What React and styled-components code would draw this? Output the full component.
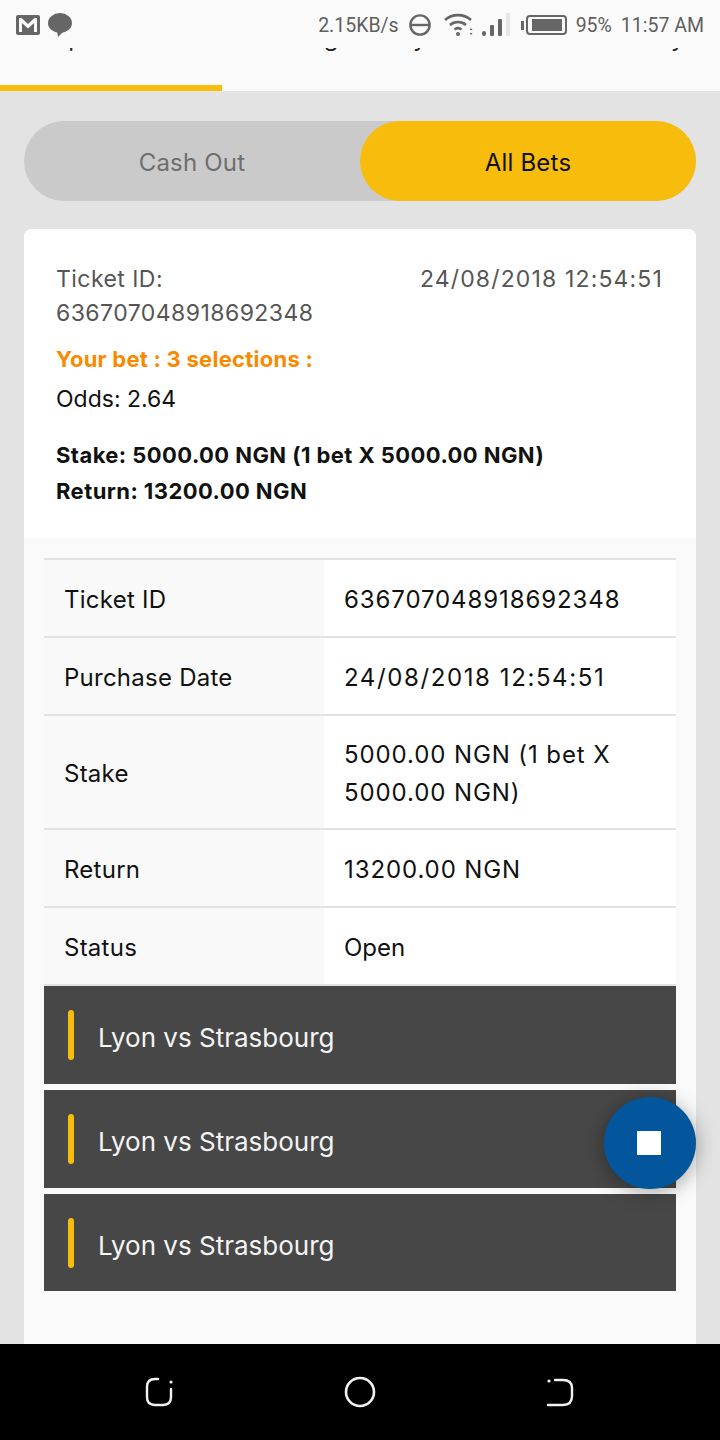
import React from 'react';
import styled, { createGlobalStyle } from 'styled-components';

const GlobalStyle = createGlobalStyle`
  html, body { margin: 0; padding: 0; background: #e3e3e3; }
  * { box-sizing: border-box; }
`;

const Screen = styled.div`
  width: 720px;
  height: 1440px;
  display: flex;
  flex-direction: column;
  overflow: hidden;
  position: relative;
  font-family: Inter, "Noto Sans", sans-serif;
  background: #e3e3e3;
`;

const StatusBar = styled.div`
  height: 48px;
  flex: none;
  display: flex;
  align-items: center;
  padding: 2px 16px 0;
  background: #fafafa;
  color: #5f5f5f;
  font-family: Roboto, sans-serif;
  font-size: 19.5px;
`;

const StatusLeft = styled.div`
  display: flex;
  align-items: center;
  gap: 8px;
  flex: 1;
`;

const StatusRight = styled.div`
  display: flex;
  align-items: center;
`;

const StatusText = styled.span`
  display: flex;
  margin-left: ${(p) => p.$ml || 0}px;
  white-space: nowrap;
`;

const Tabs = styled.div`
  height: 43px;
  flex: none;
  background: #fafafa;
  position: relative;
  overflow: hidden;
`;

const TabLabels = styled.div`
  display: flex;
  margin-top: -28px;
  font-size: 24px;
  line-height: 36px;
  color: #222;
  white-space: nowrap;
`;

const TabLabel = styled.span`
  margin-left: ${(p) => p.$ml}px;
`;

const TabIndicator = styled.div`
  position: absolute;
  left: 0;
  bottom: 0;
  width: 222px;
  height: 6px;
  background: #f8bc0c;
`;

const Content = styled.main`
  flex: 1;
  min-height: 0;
  overflow: hidden;
  padding: 30px 24px 0;
`;

const Toggle = styled.div`
  display: grid;
  grid-template-columns: 336px 336px;
  height: 80px;
  border-radius: 40px;
  background: #cacaca;
`;

const ToggleItem = styled.div`
  display: flex;
  align-items: center;
  justify-content: center;
  padding-top: 2px;
  border-radius: 40px;
  font-size: 24px;
  letter-spacing: 0.2px;
  background: ${(p) => (p.$active ? '#f8bc0c' : 'transparent')};
  color: ${(p) => (p.$active ? '#111' : '#6e6e6e')};
`;

const Card = styled.section`
  margin-top: 28px;
  border-radius: 8px 8px 0 0;
  background: #fafafa;
  padding-bottom: 80px;
`;

const Summary = styled.div`
  background: #fff;
  border-radius: 8px 8px 0 0;
  height: 309px;
  padding: 33px 32px 0;
  color: #111;
  font-size: 23px;
  line-height: 36px;
`;

const SummaryHead = styled.div`
  display: flex;
  justify-content: space-between;
  color: #555;
  line-height: 34px;
  letter-spacing: 0.45px;
`;

const SummaryDate = styled.div`
  letter-spacing: 1.15px;
  margin-right: 1px;
`;

const Accent = styled.div`
  margin-top: 11px;
  color: #f98a00;
  font-weight: 700;
  font-size: 22px;
  letter-spacing: 0.25px;
`;

const Odds = styled.div`
  margin-top: 4px;
`;

const Totals = styled.div`
  margin-top: 20px;
  font-weight: 700;
  font-size: 22px;
  letter-spacing: 0.43px;
`;

const Table = styled.div`
  margin: 20px 20px 0;
  border-top: 2px solid #e3e3e3;
`;

const Row = styled.div`
  display: grid;
  grid-template-columns: 280px 352px;
  border-bottom: 2px solid #e3e3e3;
`;

const KeyCell = styled.div`
  display: flex;
  align-items: center;
  min-height: 76px;
  padding: 19px 20px 17px;
  background: #f9f9f9;
  font-size: 24px;
  letter-spacing: 0.25px;
  color: #111;
`;

const ValueCell = styled(KeyCell)`
  padding: 20px 20px 16px;
  background: #fff;
  line-height: 38px;
  letter-spacing: ${(p) => (p.$date ? 1.6 : p.$plain ? 0 : 0.9)}px;
`;

const Match = styled.div`
  height: 98px;
  margin: 0 20px 6px;
  display: flex;
  align-items: center;
  gap: 24px;
  padding-left: 24px;
  background: #474747;
  color: #f4f4f4;
  font-size: 26px;
  &:last-child { height: 97px; }
`;

const MatchTick = styled.span`
  width: 6px;
  height: 50px;
  border-radius: 3px;
  background: #f8bc0c;
`;

const MatchName = styled.span`
  margin-top: 5px;
`;

const Fab = styled.button`
  position: absolute;
  left: 604px;
  top: 1097px;
  width: 92px;
  height: 92px;
  padding: 0;
  border: 0;
  border-radius: 50%;
  display: flex;
  align-items: center;
  justify-content: center;
  background: #03569b;
  box-shadow: 0 3px 20px rgba(0, 0, 0, 0.35);
`;

const FabSquare = styled.span`
  display: block;
  width: 24px;
  height: 24px;
  margin-left: -2px;
  background: #fff;
`;

const NavBar = styled.nav`
  height: 96px;
  flex: none;
  background: #000;
  display: grid;
  grid-template-columns: 320px 80px 320px;
  align-items: center;
  justify-items: center;
`;

const GmailIcon = () => (
  <svg width="24" height="20" viewBox="0 0 24 20">
    <rect width="24" height="20" rx="2" fill="#666" />
    <path d="M3 17V3h2.500L12 9l6.500-6H21v14h-3V8l-6 5.500L6 8v9z" fill="#fafafa" />
  </svg>
);

const ChatIcon = () => (
  <svg width="24" height="24" viewBox="0 0 24 24">
    <ellipse cx="12" cy="10" rx="12" ry="10" fill="#666" />
    <path d="M9 18l1 6 6-6z" fill="#666" />
  </svg>
);

const DndIcon = () => (
  <svg width="22" height="22" viewBox="0 0 22 22" fill="none" stroke="#666" strokeWidth="2.4">
    <circle cx="11" cy="11" r="9.6" />
    <path d="M2 11h18" />
  </svg>
);

const WifiIcon = () => (
  <svg width="30" height="24" viewBox="0 0 30 24" fill="none" stroke="#666" strokeWidth="2.6">
    <path d="M1 7c7-6.500 19-6.500 26 0" />
    <path d="M6 12c4.500-4 11.500-4 16 0" />
    <path d="M10.500 16.500c2-1.500 5-1.500 7 0" />
    <circle cx="14" cy="21" r="2" fill="#666" stroke="none" />
    <path d="M27 15l1.500 2h-3zM27 22l1.500-2h-3z" fill="#666" stroke="none" />
  </svg>
);

const SignalIcon = () => (
  <svg width="28" height="24" viewBox="0 0 28 24">
    <rect x="0" y="18" width="4" height="5" rx="2" fill="#666" />
    <rect x="8" y="12" width="4" height="11" rx="1" fill="#666" />
    <rect x="16" y="6" width="4" height="17" rx="1" fill="#666" />
    <rect x="24" y="0" width="4" height="23" rx="1" fill="#e6e6e6" />
  </svg>
);

const BatteryIcon = () => (
  <svg width="46" height="20" viewBox="0 0 46 20">
    <rect x="0" y="6" width="3" height="9" fill="#666" />
    <rect x="6" y="1" width="39" height="18" rx="3" fill="none" stroke="#666" strokeWidth="2" />
    <rect x="11" y="4" width="30" height="12" fill="#666" />
  </svg>
);

const RecentsIcon = () => (
  <svg width="30" height="30" viewBox="0 0 30 30" fill="none" stroke="#f2f2f2" strokeWidth="2.4" strokeLinecap="round">
    <path d="M13 2h-3C4.500 2 2 5 2 10v10c0 5.500 2.500 8 8 8h8c5.500 0 8-2.500 8-8v-8" />
    <circle cx="26" cy="5" r="1.600" fill="#f2f2f2" stroke="none" />
  </svg>
);

const HomeIcon = () => (
  <svg width="32" height="32" viewBox="0 0 32 32" fill="none" stroke="#f2f2f2" strokeWidth="2.6">
    <circle cx="16" cy="16" r="14" />
  </svg>
);

const BackIcon = () => (
  <svg width="30" height="30" viewBox="0 0 30 30" fill="none" stroke="#f2f2f2" strokeWidth="2.4" strokeLinecap="round">
    <path d="M10 3h8c6 0 9 2.500 9 8v8c0 6-3 9-9 9H3" />
    <circle cx="4" cy="4" r="1.600" fill="#f2f2f2" stroke="none" />
  </svg>
);

const App = () => (
  <Screen>
    <GlobalStyle />
    <StatusBar>
      <StatusLeft>
        <GmailIcon />
        <ChatIcon />
      </StatusLeft>
      <StatusRight>
        <StatusText>2.15KB/s</StatusText>
        <StatusText $ml={10}><DndIcon /></StatusText>
        <StatusText $ml={13}><WifiIcon /></StatusText>
        <StatusText $ml={8}><SignalIcon /></StatusText>
        <StatusText $ml={11}><BatteryIcon /></StatusText>
        <StatusText $ml={9}>95%</StatusText>
        <StatusText $ml={9}>11:57 AM</StatusText>
      </StatusRight>
    </StatusBar>
    <Tabs>
      <TabLabels>
        <TabLabel $ml={50}>Open Bets</TabLabel>
        <TabLabel $ml={91}>Betting History</TabLabel>
        <TabLabel $ml={91}>Settled History</TabLabel>
      </TabLabels>
      <TabIndicator />
    </Tabs>
    <Content>
      <Toggle>
        <ToggleItem>Cash Out</ToggleItem>
        <ToggleItem $active>All Bets</ToggleItem>
      </Toggle>
      <Card>
        <Summary>
          <SummaryHead>
            <div>Ticket ID:<br />636707048918692348</div>
            <SummaryDate>24/08/2018 12:54:51</SummaryDate>
          </SummaryHead>
          <Accent>Your bet : 3 selections :</Accent>
          <Odds>Odds: 2.64</Odds>
          <Totals>
            <div>Stake: 5000.00 NGN (1 bet X 5000.00 NGN)</div>
            <div>Return: 13200.00 NGN</div>
          </Totals>
        </Summary>
        <Table>
          <Row>
            <KeyCell>Ticket ID</KeyCell>
            <ValueCell>636707048918692348</ValueCell>
          </Row>
          <Row>
            <KeyCell>Purchase Date</KeyCell>
            <ValueCell $date>24/08/2018 12:54:51</ValueCell>
          </Row>
          <Row>
            <KeyCell>Stake</KeyCell>
            <ValueCell>5000.00 NGN (1 bet X 5000.00 NGN)</ValueCell>
          </Row>
          <Row>
            <KeyCell>Return</KeyCell>
            <ValueCell>13200.00 NGN</ValueCell>
          </Row>
          <Row>
            <KeyCell>Status</KeyCell>
            <ValueCell $plain>Open</ValueCell>
          </Row>
        </Table>
        {[0, 1, 2].map((i) => (
          <Match key={i}>
            <MatchTick />
            <MatchName>Lyon vs Strasbourg</MatchName>
          </Match>
        ))}
      </Card>
    </Content>
    <Fab><FabSquare /></Fab>
    <NavBar>
      <RecentsIcon />
      <HomeIcon />
      <BackIcon />
    </NavBar>
  </Screen>
);

export default App;
